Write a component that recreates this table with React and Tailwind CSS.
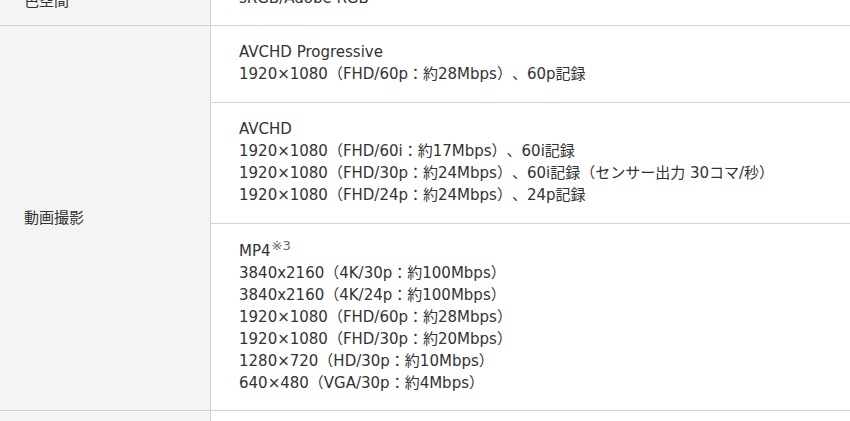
import React from 'react';

const rows = [
  {
    label: '色空間',
    values: [['sRGB/Adobe RGB']],
  },
  {
    label: '動画撮影',
    values: [
      ['AVCHD Progressive', '1920×1080（FHD/60p：約28Mbps）、60p記録'],
      [
        'AVCHD',
        '1920×1080（FHD/60i：約17Mbps）、60i記録',
        '1920×1080（FHD/30p：約24Mbps）、60i記録（センサー出力 30コマ/秒）',
        '1920×1080（FHD/24p：約24Mbps）、24p記録',
      ],
      [
        'MP4※3',
        '3840x2160（4K/30p：約100Mbps）',
        '3840x2160（4K/24p：約100Mbps）',
        '1920×1080（FHD/60p：約28Mbps）',
        '1920×1080（FHD/30p：約20Mbps）',
        '1280×720（HD/30p：約10Mbps）',
        '640×480（VGA/30p：約4Mbps）',
      ],
    ],
  },
  { label: '', values: [['']] },
];

const Line = ({ text }) => {
  if (text.endsWith('※3')) {
    return (
      <div>
        {text.slice(0, -2)}
        <sup className="text-[13px] text-[#666] ml-[1px]">※3</sup>
      </div>
    );
  }
  return <div>{text}</div>;
};

const pad = (i, j) => {
  if (i === 0) return 'h-[55px] pt-[17px]';
  if (j === 2) return 'pt-[16px] pb-[16px]';
  return 'pt-[15px] pb-[17px]';
};

export default function App() {
  return (
    <div
      className="w-[850px] h-[421px] overflow-hidden bg-white text-[#333] text-[15px] leading-[22px] [text-spacing-trim:space-all]"
      style={{ fontFamily: '"DejaVu Sans", "Noto Sans CJK JP", sans-serif' }}
    >
      <div className="-mt-[30px]">
        {rows.map((row, i) => (
          <div key={i} className="flex border-b border-[#d2d2d2]">
            <div
              className={`w-[211px] shrink-0 bg-[#f4f4f4] border-r border-[#d2d2d2] flex items-center pl-[24px] ${i === 0 ? 'pt-[6px]' : ''}`}
            >
              {row.label}
            </div>
            <div className="flex-1">
              {row.values.map((v, j) => (
                <div
                  key={j}
                  className={`pl-[28px] ${j > 0 ? 'border-t border-[#d2d2d2]' : ''} ${pad(i, j)}`}
                >
                  {v.map((t, k) => (
                    <Line key={k} text={t} />
                  ))}
                </div>
              ))}
            </div>
          </div>
        ))}
      </div>
    </div>
  );
}
